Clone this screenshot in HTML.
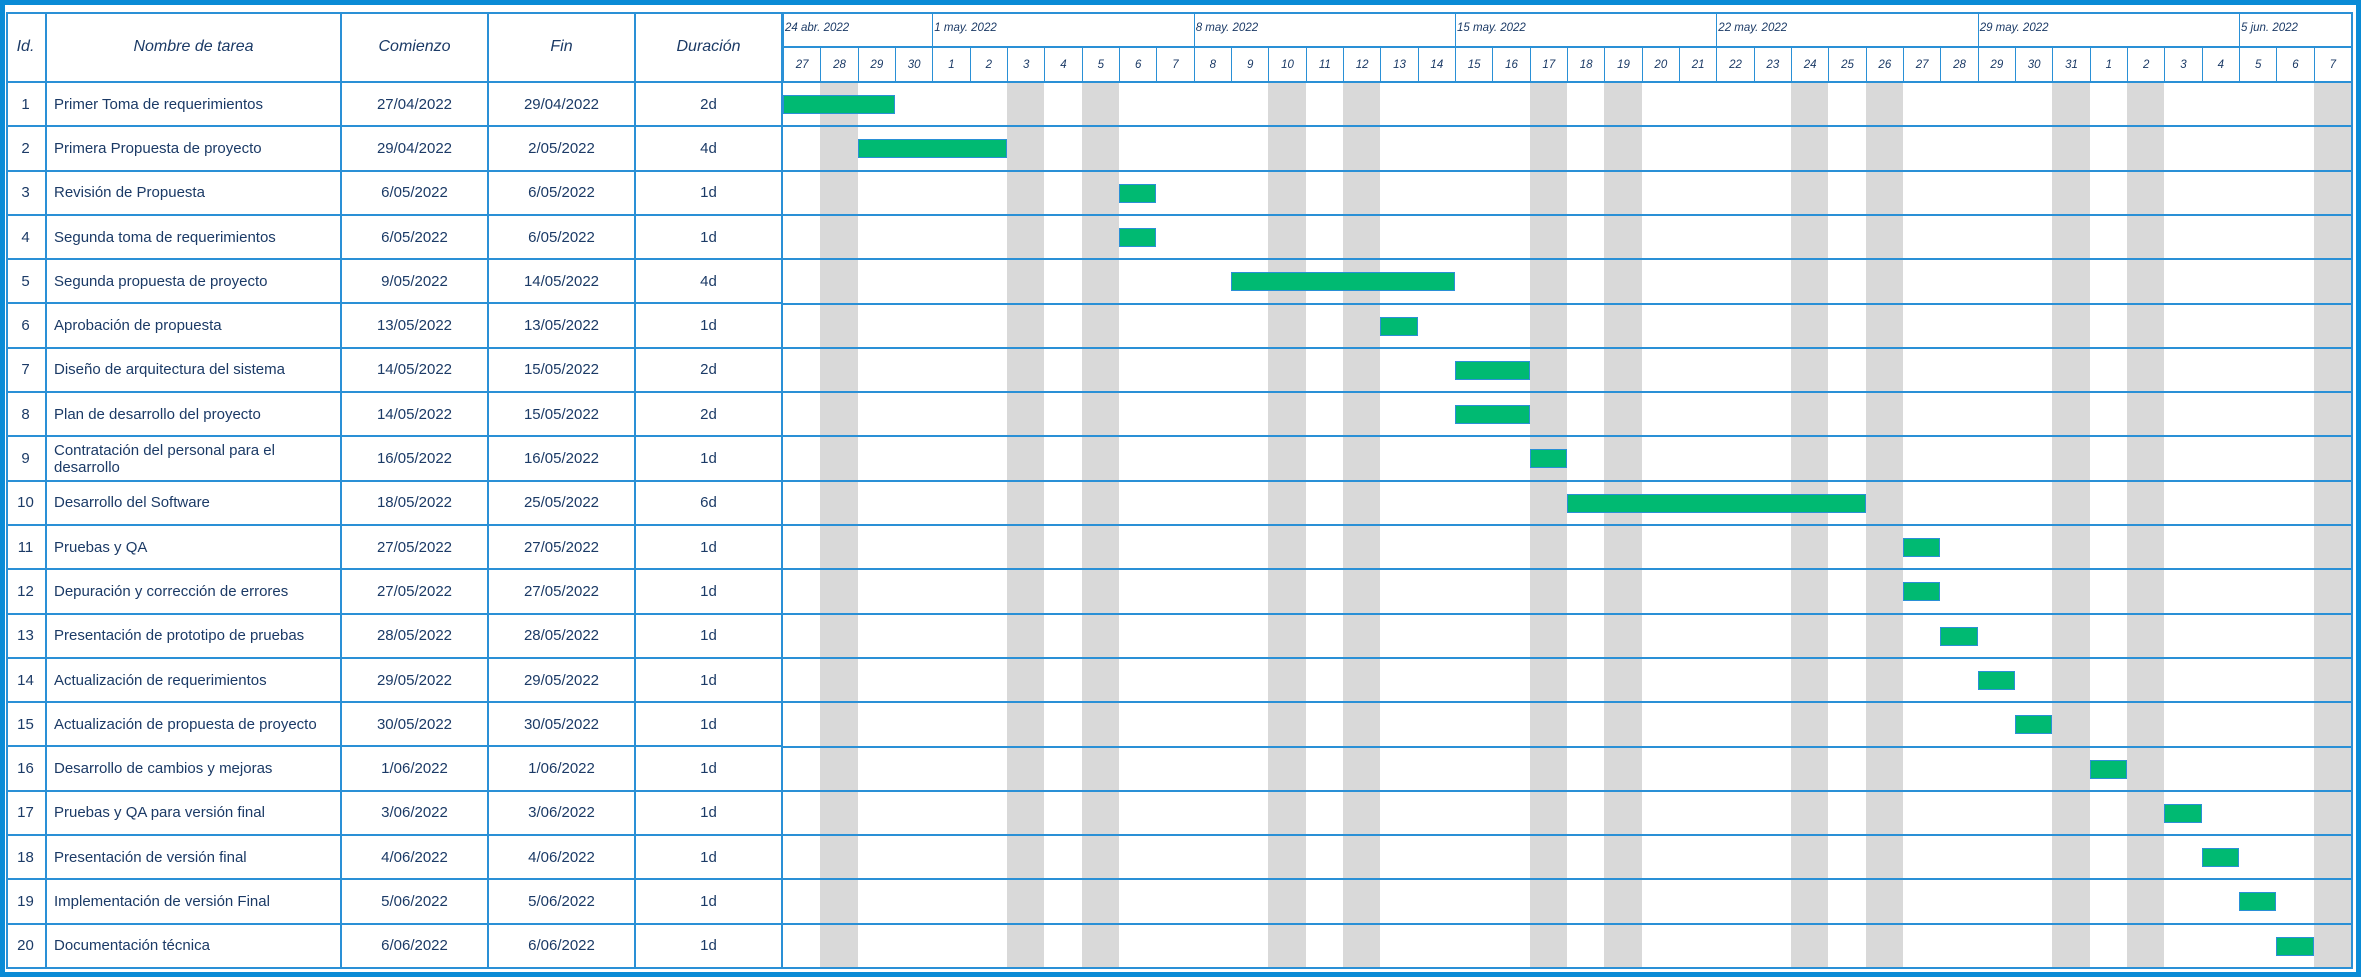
<!DOCTYPE html>
<html><head><meta charset="utf-8"><style>
*{box-sizing:border-box;margin:0;padding:0}
body{width:2361px;height:977px;background:#fff;position:relative;overflow:hidden;font-family:"Liberation Sans",sans-serif;color:#1b3a66}
.outer{position:absolute;left:0;top:0;width:2361px;height:977px;border:5px solid #0a8bd6}
.frame{position:absolute;left:6px;top:12px;width:2347px;height:957px;border:2px solid #2a90d6}
.lt{position:absolute;left:6px;top:12px;width:777px;height:957px;display:grid;grid-template-columns:41px 295px 147px 147px 147px;grid-template-rows:71px repeat(20,1fr)}
.lt div{border-right:2px solid #2a90d6;border-bottom:2px solid #2a90d6;display:flex;align-items:center;justify-content:center;font-size:15px}
.lt div.h{font-style:italic;font-size:16px}
.lt div.n{justify-content:flex-start;padding-left:7px;line-height:17px}
.ch{position:absolute;left:783px;top:12px;width:1568px;height:957px}
.mrow{position:absolute;left:0;top:0;height:36px;width:1568px;border-bottom:2px solid #2a90d6}
.m{position:absolute;top:0;height:36px;border-left:1.5px solid #2a90d6;font-size:11.5px;font-style:italic;padding-top:10px;padding-left:1px}
.drow{position:absolute;left:0;top:36px;height:35px;width:1568px;display:grid;grid-template-columns:repeat(42,1fr);border-bottom:2px solid #2a90d6}
.drow div{border-left:1.5px solid #2a90d6;font-size:11.5px;font-style:italic;display:flex;align-items:center;justify-content:center}
.body{position:absolute;left:0;top:71px;width:1568px;height:886px}
.sh{position:absolute;top:0;height:884px;width:37.33px;background:#d9d9d9}
.rl{position:absolute;left:0;width:1568px;height:2px;background:#2a90d6}
.bar{position:absolute;height:19px;background:#00ba72;border:1px solid #2a90d6}
</style></head><body>
<div class="outer"></div>
<div class="lt">
<div class="h">Id.</div><div class="h">Nombre de tarea</div><div class="h">Comienzo</div><div class="h">Fin</div><div class="h">Duración</div>
<div>1</div><div class="n">Primer Toma de requerimientos</div><div>27/04/2022</div><div>29/04/2022</div><div>2d</div>
<div>2</div><div class="n">Primera Propuesta de proyecto</div><div>29/04/2022</div><div>2/05/2022</div><div>4d</div>
<div>3</div><div class="n">Revisión de Propuesta</div><div>6/05/2022</div><div>6/05/2022</div><div>1d</div>
<div>4</div><div class="n">Segunda toma de requerimientos</div><div>6/05/2022</div><div>6/05/2022</div><div>1d</div>
<div>5</div><div class="n">Segunda propuesta de proyecto</div><div>9/05/2022</div><div>14/05/2022</div><div>4d</div>
<div>6</div><div class="n">Aprobación de propuesta</div><div>13/05/2022</div><div>13/05/2022</div><div>1d</div>
<div>7</div><div class="n">Diseño de arquitectura del sistema</div><div>14/05/2022</div><div>15/05/2022</div><div>2d</div>
<div>8</div><div class="n">Plan de desarrollo del proyecto</div><div>14/05/2022</div><div>15/05/2022</div><div>2d</div>
<div>9</div><div class="n">Contratación del personal para el<br>desarrollo</div><div>16/05/2022</div><div>16/05/2022</div><div>1d</div>
<div>10</div><div class="n">Desarrollo del Software</div><div>18/05/2022</div><div>25/05/2022</div><div>6d</div>
<div>11</div><div class="n">Pruebas y QA</div><div>27/05/2022</div><div>27/05/2022</div><div>1d</div>
<div>12</div><div class="n">Depuración y corrección de errores</div><div>27/05/2022</div><div>27/05/2022</div><div>1d</div>
<div>13</div><div class="n">Presentación de prototipo de pruebas</div><div>28/05/2022</div><div>28/05/2022</div><div>1d</div>
<div>14</div><div class="n">Actualización de requerimientos</div><div>29/05/2022</div><div>29/05/2022</div><div>1d</div>
<div>15</div><div class="n">Actualización de propuesta de proyecto</div><div>30/05/2022</div><div>30/05/2022</div><div>1d</div>
<div>16</div><div class="n">Desarrollo de cambios y mejoras</div><div>1/06/2022</div><div>1/06/2022</div><div>1d</div>
<div>17</div><div class="n">Pruebas y QA para versión final</div><div>3/06/2022</div><div>3/06/2022</div><div>1d</div>
<div>18</div><div class="n">Presentación de versión final</div><div>4/06/2022</div><div>4/06/2022</div><div>1d</div>
<div>19</div><div class="n">Implementación de versión Final</div><div>5/06/2022</div><div>5/06/2022</div><div>1d</div>
<div>20</div><div class="n">Documentación técnica</div><div>6/06/2022</div><div>6/06/2022</div><div>1d</div>
</div>
<div class="ch">
<div class="mrow">
<div class="m" style="left:0;width:149px">24 abr. 2022</div>
<div class="m" style="left:149.3px;width:261px">1 may. 2022</div>
<div class="m" style="left:410.7px;width:261px">8 may. 2022</div>
<div class="m" style="left:672px;width:261px">15 may. 2022</div>
<div class="m" style="left:933.3px;width:261px">22 may. 2022</div>
<div class="m" style="left:1194.7px;width:261px">29 may. 2022</div>
<div class="m" style="left:1456px;width:112px">5 jun. 2022</div>
</div>
<div class="drow">
<div>27</div><div>28</div><div>29</div><div>30</div><div>1</div><div>2</div><div>3</div><div>4</div><div>5</div><div>6</div><div>7</div><div>8</div><div>9</div><div>10</div><div>11</div><div>12</div><div>13</div><div>14</div><div>15</div><div>16</div><div>17</div><div>18</div><div>19</div><div>20</div><div>21</div><div>22</div><div>23</div><div>24</div><div>25</div><div>26</div><div>27</div><div>28</div><div>29</div><div>30</div><div>31</div><div>1</div><div>2</div><div>3</div><div>4</div><div>5</div><div>6</div><div>7</div>
</div>
<div class="body">
<div class="sh" style="left:37.33px"></div>
<div class="sh" style="left:224px"></div>
<div class="sh" style="left:298.67px"></div>
<div class="sh" style="left:485.33px"></div>
<div class="sh" style="left:560px"></div>
<div class="sh" style="left:746.67px"></div>
<div class="sh" style="left:821.33px"></div>
<div class="sh" style="left:1008px"></div>
<div class="sh" style="left:1082.67px"></div>
<div class="sh" style="left:1269.33px"></div>
<div class="sh" style="left:1344px"></div>
<div class="sh" style="left:1530.67px"></div>
<div class="rl" style="top:42.3px"></div><div class="rl" style="top:86.6px"></div><div class="rl" style="top:130.9px"></div><div class="rl" style="top:175.2px"></div><div class="rl" style="top:219.5px"></div><div class="rl" style="top:263.8px"></div><div class="rl" style="top:308.1px"></div><div class="rl" style="top:352.4px"></div><div class="rl" style="top:396.7px"></div><div class="rl" style="top:441px"></div><div class="rl" style="top:485.3px"></div><div class="rl" style="top:529.6px"></div><div class="rl" style="top:573.9px"></div><div class="rl" style="top:618.2px"></div><div class="rl" style="top:662.5px"></div><div class="rl" style="top:706.8px"></div><div class="rl" style="top:751.1px"></div><div class="rl" style="top:795.4px"></div><div class="rl" style="top:839.7px"></div>
<div class="bar" style="top:12px;left:0;width:112px"></div>
<div class="bar" style="top:56.3px;left:74.67px;width:149.33px"></div>
<div class="bar" style="top:100.6px;left:336px;width:37.33px"></div>
<div class="bar" style="top:144.9px;left:336px;width:37.33px"></div>
<div class="bar" style="top:189.2px;left:448px;width:224px"></div>
<div class="bar" style="top:233.5px;left:597.33px;width:37.33px"></div>
<div class="bar" style="top:277.8px;left:672px;width:74.67px"></div>
<div class="bar" style="top:322.1px;left:672px;width:74.67px"></div>
<div class="bar" style="top:366.4px;left:746.67px;width:37.33px"></div>
<div class="bar" style="top:410.7px;left:784px;width:298.67px"></div>
<div class="bar" style="top:455px;left:1120px;width:37.33px"></div>
<div class="bar" style="top:499.3px;left:1120px;width:37.33px"></div>
<div class="bar" style="top:543.6px;left:1157.33px;width:37.33px"></div>
<div class="bar" style="top:587.9px;left:1194.67px;width:37.33px"></div>
<div class="bar" style="top:632.2px;left:1232px;width:37.33px"></div>
<div class="bar" style="top:676.5px;left:1306.67px;width:37.33px"></div>
<div class="bar" style="top:720.8px;left:1381.33px;width:37.33px"></div>
<div class="bar" style="top:765.1px;left:1418.67px;width:37.33px"></div>
<div class="bar" style="top:809.4px;left:1456px;width:37.33px"></div>
<div class="bar" style="top:853.7px;left:1493.33px;width:37.33px"></div>
</div>
</div>
<div class="frame"></div>
</body></html>
